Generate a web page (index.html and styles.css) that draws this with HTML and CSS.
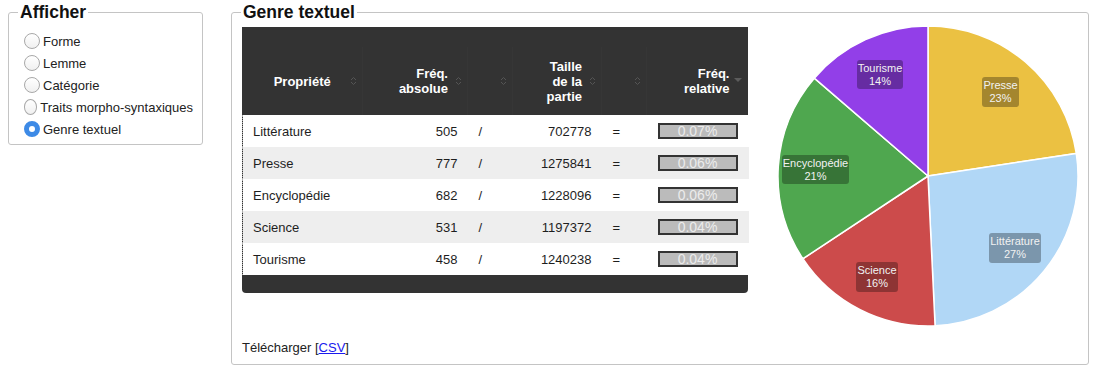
FILE: index.html
```html
<!DOCTYPE html>
<html lang="fr">
<head>
  <meta charset="UTF-8">
  <title>Genre textuel</title>
  <link rel="stylesheet" href="styles.css">
</head>
<body>

  <fieldset class="panel panel-options">
    <legend>Afficher</legend>
    <label class="option"><input type="radio" name="afficher"> Forme</label>
    <label class="option"><input type="radio" name="afficher"> Lemme</label>
    <label class="option"><input type="radio" name="afficher"> Catégorie</label>
    <label class="option"><input type="radio" name="afficher"> Traits morpho-syntaxiques</label>
    <label class="option"><input type="radio" name="afficher" checked> Genre textuel</label>
  </fieldset>

  <fieldset class="panel panel-result">
    <legend>Genre textuel</legend>

    <div class="result-row">
      <div class="table-wrap">
        <table class="freq-table">
          <colgroup>
            <col style="width:120px">
            <col style="width:105px">
            <col style="width:45px">
            <col style="width:89px">
            <col style="width:45px">
            <col style="width:102px">
          </colgroup>
          <thead>
            <tr>
              <th>Propriété<svg class="sort" viewBox="0 0 7 10"><path d="M1 4 L3.5 1.5 L6 4 M1 6 L3.5 8.5 L6 6"/></svg></th>
              <th>Fréq.<br>absolue<svg class="sort" viewBox="0 0 7 10"><path d="M1 4 L3.5 1.5 L6 4 M1 6 L3.5 8.5 L6 6"/></svg></th>
              <th><svg class="sort" viewBox="0 0 7 10"><path d="M1 4 L3.5 1.5 L6 4 M1 6 L3.5 8.5 L6 6"/></svg></th>
              <th>Taille<br>de la<br>partie<svg class="sort" viewBox="0 0 7 10"><path d="M1 4 L3.5 1.5 L6 4 M1 6 L3.5 8.5 L6 6"/></svg></th>
              <th><svg class="sort" viewBox="0 0 7 10"><path d="M1 4 L3.5 1.5 L6 4 M1 6 L3.5 8.5 L6 6"/></svg></th>
              <th>Fréq.<br>relative<svg class="sort-desc" viewBox="0 0 8 4"><path d="M0 0 H8 L4 4 Z"/></svg></th>
            </tr>
          </thead>
          <tbody>
            <tr>
              <td>Littérature</td><td class="num">505</td><td class="op">/</td>
              <td class="num">702778</td><td class="op">=</td><td class="rel"><div class="bar">0.07%</div></td>
            </tr>
            <tr>
              <td>Presse</td><td class="num">777</td><td class="op">/</td>
              <td class="num">1275841</td><td class="op">=</td><td class="rel"><div class="bar">0.06%</div></td>
            </tr>
            <tr>
              <td>Encyclopédie</td><td class="num">682</td><td class="op">/</td>
              <td class="num">1228096</td><td class="op">=</td><td class="rel"><div class="bar">0.06%</div></td>
            </tr>
            <tr>
              <td>Science</td><td class="num">531</td><td class="op">/</td>
              <td class="num">1197372</td><td class="op">=</td><td class="rel"><div class="bar">0.04%</div></td>
            </tr>
            <tr>
              <td>Tourisme</td><td class="num">458</td><td class="op">/</td>
              <td class="num">1240238</td><td class="op">=</td><td class="rel"><div class="bar">0.04%</div></td>
            </tr>
          </tbody>
        </table>
      </div>

      <svg class="pie" width="304" height="304" viewBox="0 0 304 304">
        <g class="slices">
          <path fill="#ebc142" d="M152,152 L152,2 A150,150 0 0 1 300.29,129.39 Z"/>
          <path fill="#b1d7f6" d="M152,152 L300.29,129.39 A150,150 0 0 1 159.07,301.83 Z"/>
          <path fill="#cc4b4b" d="M152,152 L159.07,301.83 A150,150 0 0 1 26.89,234.75 Z"/>
          <path fill="#4fa74f" d="M152,152 L26.89,234.75 A150,150 0 0 1 38.31,54.15 Z"/>
          <path fill="#923fe8" d="M152,152 L38.31,54.15 A150,150 0 0 1 152,2 Z"/>
        </g>
        <g class="labels">
          <rect x="206" y="53" width="37" height="30" rx="3"/>
          <text x="224.5" y="65">Presse</text>
          <text x="224.5" y="78">23%</text>

          <rect x="213" y="209" width="52" height="30" rx="3"/>
          <text x="239" y="221">Littérature</text>
          <text x="239" y="234">27%</text>

          <rect x="80" y="238" width="42" height="30" rx="3"/>
          <text x="101" y="250">Science</text>
          <text x="101" y="263">16%</text>

          <rect x="6" y="131" width="67" height="29" rx="3"/>
          <text x="39.5" y="143">Encyclopédie</text>
          <text x="39.5" y="156">21%</text>

          <rect x="81" y="36" width="46" height="29" rx="3"/>
          <text x="104" y="48">Tourisme</text>
          <text x="104" y="61">14%</text>
        </g>
      </svg>
    </div>

    <div class="download">Télécharger [<a href="#">CSV</a>]</div>
  </fieldset>

</body>
</html>
```

FILE: styles.css
```css
body {
  margin: 0;
  padding: 2px 8px 0;
  font-family: "Liberation Sans", Arial, sans-serif;
  font-size: 13px;
  color: #222;
  display: flex;
  align-items: flex-start;
  gap: 28px;
}

.panel {
  margin: 0;
  min-width: 0;
  box-sizing: border-box;
  border: 1px solid #c4c4c4;
  border-radius: 3px;
}

.panel legend {
  font-size: 17.5px;
  font-weight: bold;
  line-height: 20px;
  color: #111;
  padding: 0 2px;
}

/* Afficher */
.panel-options {
  width: 195px;
  padding: 8px 9px 4px;
}

.option {
  display: flex;
  align-items: center;
  height: 22px;
  margin-left: 6px;
  white-space: nowrap;
}

.option input {
  appearance: none;
  -webkit-appearance: none;
  width: 16px;
  height: 16px;
  margin: 0 3px 0 0;
  box-sizing: border-box;
  border: 1px solid #a8a8a8;
  border-radius: 50%;
  background: linear-gradient(#fff, #f0f0f0);
}

.option input:checked {
  border: 5px solid #3d8ae6;
  background: #fff;
}

/* Genre textuel */
.panel-result {
  width: 858px;
  padding: 2px 9px 9px 10px;
}

.panel-result legend {
  margin-left: -1px;
}

.result-row {
  display: flex;
  align-items: flex-start;
  gap: 28px;
}

.table-wrap {
  width: 506px;
  margin-top: 3px;
  padding: 20px 0 18px;
  background: #333;
  border-radius: 0 0 4px 4px;
}

.freq-table {
  width: 100%;
  border-collapse: collapse;
  table-layout: fixed;
}

.freq-table th {
  position: relative;
  height: 68px;
  padding: 0 19px 0 10px;
  color: #fff;
  font-weight: bold;
  line-height: 15px;
  text-align: right;
  vertical-align: middle;
  border-left: 1px solid #363636;
}

.freq-table th:first-child {
  border-left: none;
  text-align: center;
  padding: 0 10px;
}

.sort {
  position: absolute;
  right: 5px;
  top: 50%;
  width: 7px;
  height: 10px;
  margin-top: -5px;
  fill: none;
  stroke: #555;
  stroke-width: 1;
}

.sort-desc {
  position: absolute;
  right: 7px;
  top: 50%;
  width: 8px;
  height: 4px;
  margin-top: -3px;
  fill: #5c5c5c;
}

.freq-table tbody tr {
  background: #fff;
}

.freq-table tbody tr:nth-child(even) {
  background: #eee;
}

.freq-table td {
  height: 32px;
  padding: 0 10px;
  color: #1e1e1e;
}

.freq-table td:first-child {
  border-left: 1px dotted #aaa;
}

.freq-table td.num {
  text-align: right;
}

.freq-table td.op {
  padding-left: 11px;
}

.freq-table td.rel {
  padding: 0 11px;
}

.bar {
  width: 80px;
  height: 16px;
  box-sizing: border-box;
  border: 2px solid #333;
  background: #bbb;
  color: #ececec;
  font-size: 14px;
  line-height: 12px;
  text-align: center;
}

/* Camembert */
.pie {
  display: block;
  flex: none;
}

.slices path {
  stroke: #fff;
  stroke-width: 1.5;
}

.labels rect {
  fill: rgba(0, 0, 0, 0.3);
}

.labels text {
  font-family: "Liberation Sans", Arial, sans-serif;
  font-size: 11px;
  fill: #f2f2f2;
  text-anchor: middle;
}

.download {
  margin-top: 12px;
  line-height: 15px;
}

.download a {
  color: #1a1aee;
}
```
